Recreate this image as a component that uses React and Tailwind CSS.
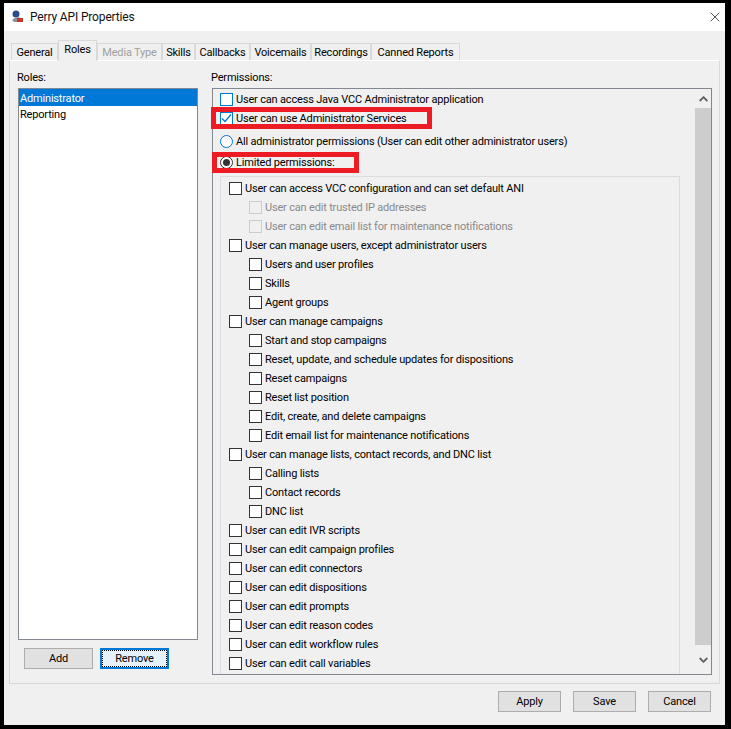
import { X } from 'lucide-react';

const tabs = [
  { label: 'General', w: 'w-[47px]' },
  { label: 'Roles', w: 'w-[39px]', active: true },
  { label: 'Media Type', w: 'w-[65px]', disabled: true },
  { label: 'Skills', w: 'w-[33px]' },
  { label: 'Callbacks', w: 'w-[55px]' },
  { label: 'Voicemails', w: 'w-[61px]' },
  { label: 'Recordings', w: 'w-[60px]' },
  { label: 'Canned Reports', w: 'w-[89px]' },
];

const perms = [
  { label: 'User can access VCC configuration and can set default ANI' },
  { label: 'User can edit trusted IP addresses', sub: true, disabled: true },
  { label: 'User can edit email list for maintenance notifications', sub: true, disabled: true },
  { label: 'User can manage users, except administrator users' },
  { label: 'Users and user profiles', sub: true },
  { label: 'Skills', sub: true },
  { label: 'Agent groups', sub: true },
  { label: 'User can manage campaigns' },
  { label: 'Start and stop campaigns', sub: true },
  { label: 'Reset, update, and schedule updates for dispositions', sub: true },
  { label: 'Reset campaigns', sub: true },
  { label: 'Reset list position', sub: true },
  { label: 'Edit, create, and delete campaigns', sub: true },
  { label: 'Edit email list for maintenance notifications', sub: true },
  { label: 'User can manage lists, contact records, and DNC list' },
  { label: 'Calling lists', sub: true },
  { label: 'Contact records', sub: true },
  { label: 'DNC list', sub: true },
  { label: 'User can edit IVR scripts' },
  { label: 'User can edit campaign profiles' },
  { label: 'User can edit connectors' },
  { label: 'User can edit dispositions' },
  { label: 'User can edit prompts' },
  { label: 'User can edit reason codes' },
  { label: 'User can edit workflow rules' },
  { label: 'User can edit call variables' },
];

function Check({ disabled, blue, checked }) {
  const border = disabled ? 'border-[#cccccc]' : blue ? 'border-[#0078d7]' : 'border-[#333333]';
  return (
    <span className={`w-[13px] h-[13px] border shrink-0 flex items-center justify-center ${border} ${disabled ? 'bg-[#f0f0f0]' : 'bg-white'}`}>
      {checked && (
        <svg width="11" height="11" viewBox="0 0 11 11" fill="none">
          <path d="M1 5.5 L4 8.5 L10 1.5" stroke="#0078d7" strokeWidth="1.2" />
        </svg>
      )}
    </span>
  );
}

function Radio({ selected }) {
  return (
    <span className={`w-[13px] h-[13px] rounded-full border shrink-0 flex items-center justify-center bg-white ${selected ? 'border-[#333333]' : 'border-[#0078d7]'}`}>
      {selected && <span className="w-[7px] h-[7px] rounded-full bg-[#333333]" />}
    </span>
  );
}

function Button({ children, className = '' }) {
  return (
    <div className={`h-[21px] flex items-center justify-center border border-[#adadad] bg-[#e1e1e1] text-black ${className}`}>
      {children}
    </div>
  );
}

export default function App() {
  return (
    <div className="w-[731px] h-[729px] bg-black pt-[3px] pl-[4px] overflow-hidden text-[11px] tracking-[-0.18px] leading-[16px] text-black font-['Roboto',sans-serif]">
      <div className="relative w-[721px] h-[722px] bg-[#f0f0f0] flex flex-col">
        {/* title bar */}
        <div className="h-[28px] bg-white flex items-center justify-between shrink-0">
          <div className="flex items-center">
            <svg className="ml-[7px]" width="13" height="14" viewBox="0 0 13 14">
              <circle cx="5" cy="4" r="3.5" fill="#2a4a8a" />
              <path d="M1 10 Q5 6 10 8 L12 12 L3 12 Z" fill="#8a8f9c" />
              <rect x="6" y="8" width="6" height="4" fill="#c0392b" />
            </svg>
            <span className="ml-[6px] text-[12px] tracking-[-0.15px] text-[#111111]">Perry API Properties</span>
          </div>
          <X className="mr-[2px] text-black" size={16} strokeWidth={1} />
        </div>

        {/* tab strip */}
        <div className="h-[29px] pl-[7px] flex items-end shrink-0">
          {tabs.map((t) => (
            <div
              key={t.label}
              className={`${t.w} border border-b-0 border-[#d9d9d9] flex items-center justify-center whitespace-nowrap ${
                t.active ? 'h-[21px] pb-[2px] bg-[#f0f0f0] relative z-10 -mb-px' : 'h-[17px] pt-px'
              } ${t.disabled ? 'text-[#a0a0a0]' : ''}`}
            >
              {t.label}
            </div>
          ))}
        </div>

        {/* tab panel */}
        <div className="ml-[5px] w-[711px] h-[624px] border border-[#d9d9d9] border-t-white flex pt-[9px] shrink-0">
          {/* roles column */}
          <div className="w-[194px] pl-[7px] shrink-0 flex flex-col">
            <div className="h-[18px] leading-[16px]">Roles:</div>
            <div className="ml-px w-[180px] h-[552px] border border-[#828790] bg-white shrink-0">
              <div className="h-[17px] pt-[2px] bg-[#0078d7] text-white pl-px">Administrator</div>
              <div className="h-[15px] pt-px pl-px">Reporting</div>
            </div>
            <div className="ml-[7px] mt-[8px] flex gap-[7px]">
              <Button className="w-[69px]">Add</Button>
              <Button className="w-[69px] border-2 !border-[#0078d7] bg-[#e5f1fb]">
                <span className="w-[65px] h-[17px] border border-dotted border-black flex items-center justify-center">Remove</span>
              </Button>
            </div>
          </div>

          {/* permissions column */}
          <div className="pl-[8px] flex flex-col">
            <div className="h-[18px] leading-[16px] -ml-px">Permissions:</div>
            <div className="w-[500px] h-[587px] border border-[#828790] flex overflow-hidden">
              <div className="w-[482px] shrink-0 overflow-hidden pt-px">
                <div className="h-[19px] pl-[7px] flex items-center gap-[3px]">
                  <Check blue />
                  <span>User can access Java VCC Administrator application</span>
                </div>
                <div className="h-[19px] pl-[7px] flex items-center gap-[3px]">
                  <Check blue checked />
                  <span>User can use Administrator Services</span>
                </div>
                <div className="h-[21px] mt-[3px] pl-[7px] flex items-center gap-[3px]">
                  <Radio />
                  <span>All administrator permissions (User can edit other administrator users)</span>
                </div>
                <div className="h-[21px] pl-[7px] flex items-center gap-[3px]">
                  <Radio selected />
                  <span>Limited permissions:</span>
                </div>
                <div className="ml-[7px] w-[460px] border border-[#dcdcdc] pt-[2px] pb-[20px] mt-[3px]">
                  {perms.map((p) => (
                    <div
                      key={p.label}
                      className={`h-[19px] flex items-center gap-[3px] ${p.sub ? 'pl-[28px]' : 'pl-[8px]'} ${p.disabled ? 'text-[#8a8a8a]' : ''}`}
                    >
                      <Check disabled={p.disabled} />
                      <span>{p.label}</span>
                    </div>
                  ))}
                </div>
              </div>
              {/* scrollbar */}
              <div className="w-[16px] bg-[#f0f0f0] flex flex-col shrink-0">
                <div className="h-[19px] flex items-center justify-center shrink-0">
                  <svg width="9" height="6" viewBox="0 0 9 6" fill="none">
                    <path d="M0.7 5 L4.5 1.2 L8.3 5" stroke="#606060" strokeWidth="1.8" />
                  </svg>
                </div>
                <div className="h-[537px] bg-[#cdcdcd] shrink-0" />
                <div className="flex-1 flex items-center justify-center">
                  <svg width="9" height="6" viewBox="0 0 9 6" fill="none">
                    <path d="M0.7 1 L4.5 4.8 L8.3 1" stroke="#606060" strokeWidth="1.8" />
                  </svg>
                </div>
              </div>
            </div>
          </div>
        </div>

        {/* bottom buttons */}
        <div className="flex justify-end gap-[12px] pr-[14px] pt-[7px]">
          <Button className="w-[63px]">Apply</Button>
          <Button className="w-[63px]">Save</Button>
          <Button className="w-[63px]">Cancel</Button>
        </div>

        {/* red annotation boxes */}
        <div className="absolute left-[207px] top-[104px] w-[221px] h-[22px] border-[5px] border-[#ed1c24]" />
        <div className="absolute left-[208px] top-[149px] w-[147px] h-[21px] border-[5px] border-[#ed1c24]" />
      </div>
    </div>
  );
}
